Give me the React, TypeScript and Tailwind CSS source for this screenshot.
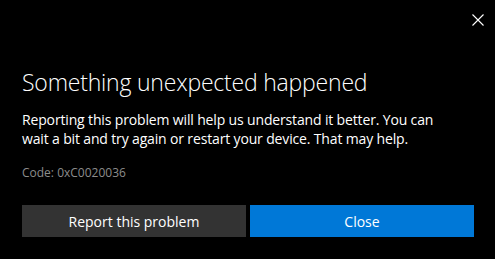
export default function App() {
  return (
    <div className="h-[259px] w-full bg-black text-white font-['Open_Sans',sans-serif] flex flex-col pl-[22px] pr-[21px]">
      {/* close glyph */}
      <div className="flex justify-end pt-[13px] mr-[-11px]">
        <svg width="14" height="14" viewBox="0 0 14 14" className="text-white">
          <path d="M1.5 1.5 L12.5 12.5 M12.5 1.5 L1.5 12.5" stroke="currentColor" strokeWidth="1.1" fill="none" />
        </svg>
      </div>

      <h1 className="mt-[40px] text-[23px] leading-[30px] font-light tracking-[-0.2px]">
        Something unexpected happened
      </h1>

      <p className="mt-[13px] max-w-[440px] text-[14px] leading-[19px] tracking-[-0.15px]">
        Reporting this problem will help us understand it better. You can wait a bit and try again or restart your device. That may help.
      </p>

      <p className="mt-[17px] text-[12px] leading-[16px] text-[#8c8c8c]">Code: 0xC0020036</p>

      <div className="mt-[24px] grid grid-cols-2 gap-[4px]">
        <button className="h-[32px] bg-[#333333] text-[14px] text-white">Report this problem</button>
        <button className="h-[32px] bg-[#0078d7] text-[14px] text-white">Close</button>
      </div>
    </div>
  );
}
